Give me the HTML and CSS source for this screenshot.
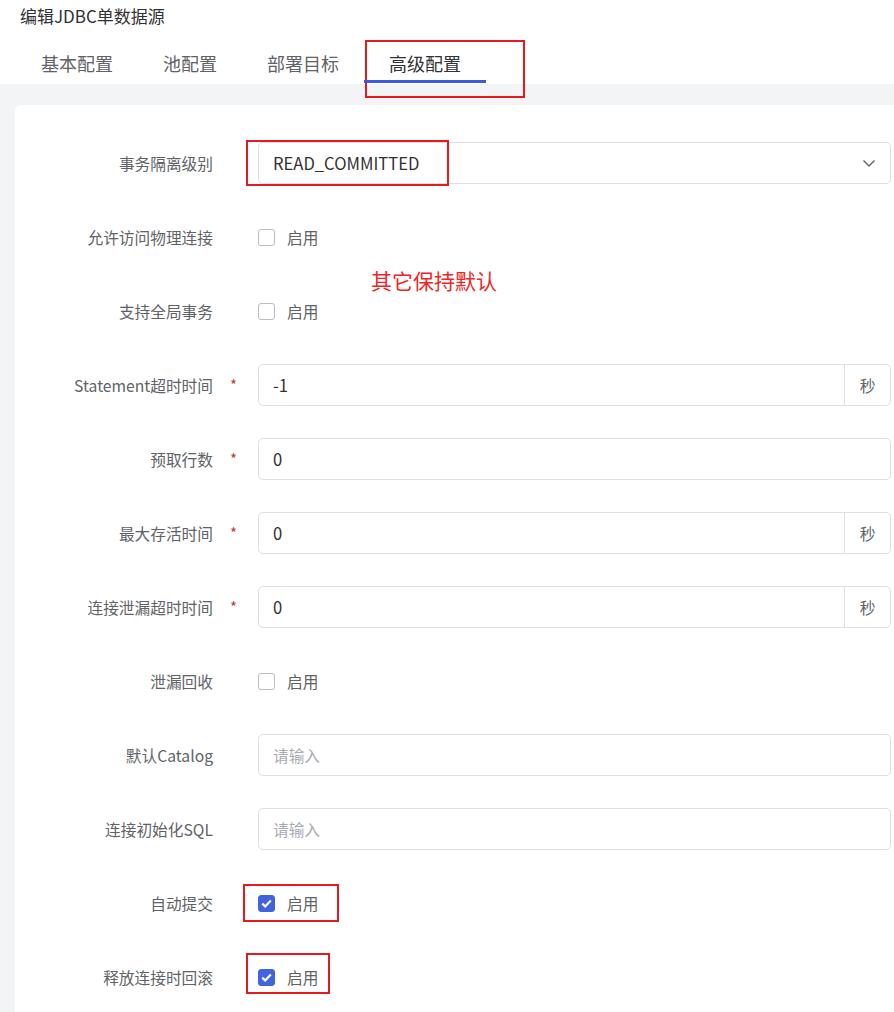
FILE: index.html
```html
<!DOCTYPE html>
<html lang="zh-CN">
<head>
<meta charset="utf-8">
<title>编辑JDBC单数据源</title>
<link rel="stylesheet" href="styles.css">
</head>
<body>
<div class="title">编辑JDBC单数据源</div>
<div class="tabs">
  <div class="tab">基本配置</div>
  <div class="tab">池配置</div>
  <div class="tab">部署目标</div>
  <div class="tab active">高级配置<span class="mark mark-tab"></span></div>
</div>
<div class="page">
  <div class="card">
    <div class="note">其它保持默认</div>

    <div class="row">
      <div class="label">事务隔离级别</div>
      <div class="req"></div>
      <div class="field">
        <div class="input select">
          <span class="value">READ_COMMITTED</span>
          <svg class="chev" width="14" height="14" viewBox="0 0 14 14"><path d="M1.5 4.5 L7 10 L12.5 4.5" fill="none" stroke="#606266" stroke-width="1.4"/></svg>
        </div>
        <span class="mark mark-select"></span>
      </div>
    </div>

    <div class="row">
      <div class="label">允许访问物理连接</div>
      <div class="req"></div>
      <div class="field"><label class="check"><span class="box"></span><span>启用</span></label></div>
    </div>

    <div class="row">
      <div class="label">支持全局事务</div>
      <div class="req"></div>
      <div class="field"><label class="check"><span class="box"></span><span>启用</span></label></div>
    </div>

    <div class="row">
      <div class="label">Statement超时时间</div>
      <div class="req">*</div>
      <div class="field">
        <div class="input group"><span class="value">-1</span><span class="suffix">秒</span></div>
      </div>
    </div>

    <div class="row">
      <div class="label">预取行数</div>
      <div class="req">*</div>
      <div class="field"><div class="input"><span class="value">0</span></div></div>
    </div>

    <div class="row">
      <div class="label">最大存活时间</div>
      <div class="req">*</div>
      <div class="field">
        <div class="input group"><span class="value">0</span><span class="suffix">秒</span></div>
      </div>
    </div>

    <div class="row">
      <div class="label">连接泄漏超时时间</div>
      <div class="req">*</div>
      <div class="field">
        <div class="input group"><span class="value">0</span><span class="suffix">秒</span></div>
      </div>
    </div>

    <div class="row">
      <div class="label">泄漏回收</div>
      <div class="req"></div>
      <div class="field"><label class="check"><span class="box"></span><span>启用</span></label></div>
    </div>

    <div class="row">
      <div class="label">默认Catalog</div>
      <div class="req"></div>
      <div class="field"><div class="input"><span class="placeholder">请输入</span></div></div>
    </div>

    <div class="row">
      <div class="label">连接初始化SQL</div>
      <div class="req"></div>
      <div class="field"><div class="input"><span class="placeholder">请输入</span></div></div>
    </div>

    <div class="row">
      <div class="label">自动提交</div>
      <div class="req"></div>
      <div class="field">
        <label class="check"><span class="box on"><svg width="11" height="9" viewBox="0 0 11 9"><path d="M1.2 4.6 L4.2 7.4 L9.8 1.4" fill="none" stroke="#fff" stroke-width="2.2"/></svg></span><span>启用</span></label>
        <span class="mark mark-auto"></span>
      </div>
    </div>

    <div class="row">
      <div class="label">释放连接时回滚</div>
      <div class="req"></div>
      <div class="field">
        <label class="check"><span class="box on"><svg width="11" height="9" viewBox="0 0 11 9"><path d="M1.2 4.6 L4.2 7.4 L9.8 1.4" fill="none" stroke="#fff" stroke-width="2.2"/></svg></span><span>启用</span></label>
        <span class="mark mark-roll"></span>
      </div>
    </div>
  </div>
</div>
</body>
</html>
```

FILE: styles.css
```css
* { box-sizing: border-box; }
html, body { margin: 0; padding: 0; background: #fff; }
body {
  font-family: "Noto Sans CJK SC", "Noto Sans", sans-serif;
  color: #303133;
  width: 894px;
  overflow: hidden;
}
.title {
  height: 34px;
  line-height: 32px;
  padding-left: 20px;
  font-size: 17px;
  color: #303133;
}
.tabs {
  display: flex;
  height: 50px;
  padding-left: 16px;
}
.tab {
  position: relative;
  padding: 16px 25px 0;
  line-height: 26px;
  font-size: 18px;
  color: #606266;
}
.tab.active { color: #303133; }
.tab.active::after {
  content: "";
  position: absolute;
  left: 0;
  right: 0;
  bottom: 1px;
  height: 3px;
  background: #3b5bdb;
}
.mark {
  position: absolute;
  border: 2px solid #e8191e;
  pointer-events: none;
}
.mark-tab { left: 1px; top: 6px; width: 160px; height: 58px; }
.page {
  background: #f3f4f6;
  padding: 21px 0 0 15px;
  min-height: 928px;
}
.card {
  position: relative;
  background: #fff;
  border-radius: 6px 0 0 0;
  padding: 37px 3px 30px 0;
}
.note {
  position: absolute;
  left: 356px;
  top: 161px;
  font-size: 21px;
  color: #f02424;
  line-height: 28px;
}
.row {
  display: grid;
  grid-template-columns: 198px 45px 1fr;
  align-items: center;
  height: 42px;
  margin-bottom: 32px;
}
.label {
  text-align: right;
  font-size: 15.7px;
  color: #606266;
  white-space: nowrap;
}
.req {
  color: #b5472b;
  font-size: 15px;
  padding-left: 17px;
  line-height: 20px;
}
.field {
  position: relative;
  height: 42px;
  display: flex;
  align-items: center;
}
.input {
  width: 100%;
  height: 42px;
  border: 1px solid #dcdfe6;
  border-radius: 5px;
  display: flex;
  align-items: center;
  padding-left: 14px;
  font-size: 15.7px;
  color: #303133;
  background: #fff;
}
.input .value { flex: 1; font-size: 16.6px; }
.placeholder { color: #a8abb2; }
.select { padding-right: 14px; }
.chev { flex: none; }
.group { padding-right: 0; }
.suffix {
  width: 46px;
  height: 100%;
  border-left: 1px solid #dcdfe6;
  display: flex;
  align-items: center;
  justify-content: center;
  color: #606266;
  font-size: 15.7px;
}
.check {
  display: flex;
  align-items: center;
  font-size: 15.7px;
  color: #606266;
}
.box {
  width: 17px;
  height: 17px;
  border: 1px solid #b8bcc4;
  border-radius: 3px;
  margin-right: 12px;
  background: #fff;
  display: flex;
  align-items: center;
  justify-content: center;
}
.box.on {
  background: #4263e0;
  border-color: #4263e0;
}
.mark-select { left: -12px; top: -2px; width: 203px; height: 46px; }
.mark-auto { left: -15px; top: 2px; width: 96px; height: 38px; }
.mark-roll { left: -12px; top: -3px; width: 84px; height: 41px; }
```
